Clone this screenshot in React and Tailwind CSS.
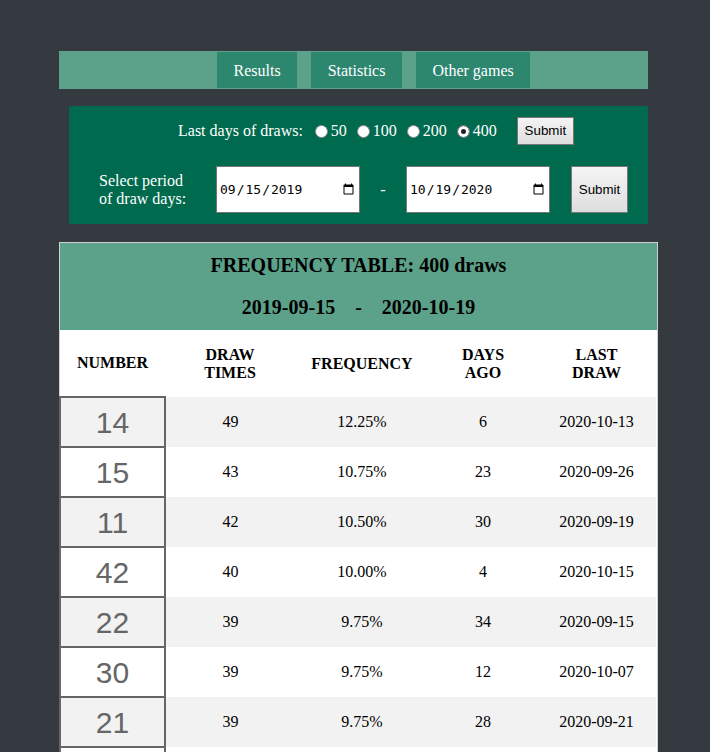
import React from "react";

const rows = [
  { num: 14, times: 49, freq: "12.25%", ago: 6, last: "2020-10-13" },
  { num: 15, times: 43, freq: "10.75%", ago: 23, last: "2020-09-26" },
  { num: 11, times: 42, freq: "10.50%", ago: 30, last: "2020-09-19" },
  { num: 42, times: 40, freq: "10.00%", ago: 4, last: "2020-10-15" },
  { num: 22, times: 39, freq: "9.75%", ago: 34, last: "2020-09-15" },
  { num: 30, times: 39, freq: "9.75%", ago: 12, last: "2020-10-07" },
  { num: 21, times: 39, freq: "9.75%", ago: 28, last: "2020-09-21" },
  { num: 7, times: 38, freq: "9.50%", ago: 9, last: "2020-10-10" },
];

const serif = "font-['Liberation_Serif','Times_New_Roman',serif]";
const btn =
  "font-['Liberation_Sans',Arial,sans-serif] text-[13.33px] text-black bg-gradient-to-b from-[#f4f4f4] to-[#dedede] border border-[#767676]";

export default function App() {
  return (
    <div className={`min-h-screen bg-[#343a40] pt-[51px] pl-[59px] ${serif}`}>
      {/* NAV */}
      <div className="w-[589px] h-[38px] bg-[#5ca18a] flex gap-[14px] pl-[158px] py-[1px]">
        <div className="bg-[#2d866e] text-white text-[16px] flex items-center px-[16.5px] pt-[2px]">Results</div>
        <div className="bg-[#2d866e] text-white text-[16px] flex items-center px-[16.5px] pt-[2px]">Statistics</div>
        <div className="bg-[#2d866e] text-white text-[16px] flex items-center px-[16.5px] pt-[2px]">Other games</div>
      </div>

      {/* FORM */}
      <div className="ml-[10px] mt-[17px] w-[579px] bg-[#006a4e] py-[11px] text-white text-[16px]">
        <div className="h-[28px] flex items-center pl-[109px]">
          <span>Last days of draws:</span>
          {["50", "100", "200", "400"].map((v, i) => (
            <label key={v} className={`flex items-center ${i === 0 ? "ml-[12px]" : "ml-[10px]"}`}>
              <input
                type="radio"
                name="days"
                defaultChecked={v === "400"}
                className="appearance-none w-[13px] h-[13px] mr-[3px] rounded-full bg-white border border-[#8a8a8a] checked:bg-[#222] checked:shadow-[inset_0_0_0_3px_#fff]"
              />
              {v}
            </label>
          ))}
          <button className={`${btn} ml-[20px] w-[57px] h-[28px]`}>Submit</button>
        </div>
        <div className="h-[47px] mt-[21px] flex items-center pl-[30px]">
          <div className="w-[117px] leading-[18px]">
            Select period
            <br />
            of draw days:
          </div>
          <input
            type="date"
            defaultValue="2019-09-15"
            className="w-[144px] h-[47px] bg-white text-black border border-[#767676] px-[2px] font-['DejaVu_Sans_Mono',monospace] text-[13px]"
          />
          <div className="w-[46px] text-center">-</div>
          <input
            type="date"
            defaultValue="2020-10-19"
            className="w-[144px] h-[47px] bg-white text-black border border-[#767676] px-[2px] font-['DejaVu_Sans_Mono',monospace] text-[13px]"
          />
          <button className={`${btn} ml-[21px] w-[57px] h-[47px]`}>Submit</button>
        </div>
      </div>

      {/* TABLE */}
      <div className="mt-[18px] w-[599px] border border-[#d0d0d0] bg-white">
        <div className="h-[87px] bg-[#5ca18a] text-black font-bold text-[20px] flex flex-col items-center pt-[11px]">
          <div className="h-[22px] leading-[22px]">FREQUENCY TABLE: 400 draws</div>
          <div className="h-[22px] leading-[22px] mt-[20px] whitespace-pre">2019-09-15    -    2020-10-19</div>
        </div>
        <table className="w-full table-fixed text-black text-[16px] -ml-[1px]">
          <colgroup>
            <col className="w-[105px]" />
            <col className="w-[130px]" />
            <col className="w-[134px]" />
            <col className="w-[108px]" />
            <col />
          </colgroup>
          <thead>
            <tr className="h-[67px] font-bold leading-[18px]">
              <th>NUMBER</th>
              <th>
                DRAW
                <br />
                TIMES
              </th>
              <th>FREQUENCY</th>
              <th>
                DAYS
                <br />
                AGO
              </th>
              <th>
                LAST
                <br />
                DRAW
              </th>
            </tr>
          </thead>
          <tbody>
            {rows.map((r, i) => (
              <tr key={r.num} className={`h-[50px] text-center ${i % 2 === 0 ? "bg-[#f2f2f2]" : "bg-white"}`}>
                <td className="border-2 border-[#666] font-['Liberation_Sans',Arial,sans-serif] text-[30px] text-[#666]">
                  {r.num}
                </td>
                <td>{r.times}</td>
                <td>{r.freq}</td>
                <td>{r.ago}</td>
                <td>{r.last}</td>
              </tr>
            ))}
          </tbody>
        </table>
      </div>
    </div>
  );
}
